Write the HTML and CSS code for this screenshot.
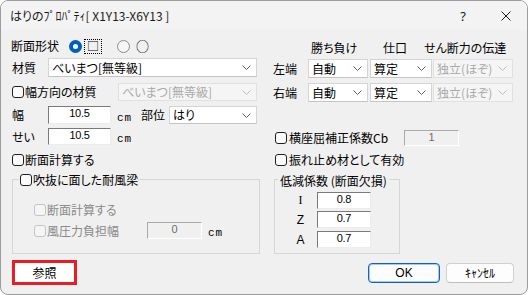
FILE: index.html
```html
<!DOCTYPE html>
<html lang="ja">
<head>
    <meta charset="UTF-8">
    <title>はりのプロパティ</title>
    <link rel="stylesheet" href="styles.css">
</head>
<body>
<div class="window">
    <div class="titlebar">
        <span class="title">はりのﾌﾟﾛﾊﾟﾃｨ[ X1Y13-X6Y13 ]</span>
        <span class="cap help">?</span>
        <span class="cap close">
            <svg width="10" height="10" viewBox="0 0 10 10"><path d="M0.5 0.5L9.5 9.5M9.5 0.5L0.5 9.5" stroke="#1b1b1b" stroke-width="1"/></svg>
        </span>
    </div>

    <div class="content">
        <!-- 左側 -->
        <div class="col">
            <div class="row r1">
                <span class="lbl w58">断面形状</span>
                <span class="radio on"></span>
                <span class="focus">□</span>
                <span class="radio off"></span>
                <span class="shape">○</span>
            </div>
            <div class="row r2">
                <span class="lbl w37">材質</span>
                <div class="combo w209">
                    <span>べいまつ[無等級]</span>
                    <svg width="9" height="5" viewBox="0 0 9 5"><polyline points="0.5,0.5 4.5,4.5 8.5,0.5" fill="none" stroke="#606060"/></svg>
                </div>
            </div>
            <div class="row r3">
                <span class="chk"></span>
                <span class="lbl w93">幅方向の材質</span>
                <div class="combo off w139">
                    <span>べいまつ[無等級]</span>
                    <svg width="9" height="5" viewBox="0 0 9 5"><polyline points="0.5,0.5 4.5,4.5 8.5,0.5" fill="none" stroke="#bcbcbc"/></svg>
                </div>
            </div>
            <div class="row r4">
                <span class="lbl w37">幅</span>
                <span class="edit w63">10.5</span>
                <span class="unit">cm</span>
                <span class="lbl bui">部位</span>
                <div class="combo w88">
                    <span>はり</span>
                    <svg width="9" height="5" viewBox="0 0 9 5"><polyline points="0.5,0.5 4.5,4.5 8.5,0.5" fill="none" stroke="#606060"/></svg>
                </div>
            </div>
            <div class="row r5">
                <span class="lbl w37">せい</span>
                <span class="edit w63">10.5</span>
                <span class="unit">cm</span>
            </div>
            <div class="row r6">
                <span class="chk"></span>
                <span class="lbl">断面計算する</span>
            </div>
            <fieldset class="group gl">
                <legend><span class="lg"><span class="chk"></span><span class="lbl">吹抜に面した耐風梁</span></span></legend>
                <div class="row g1 dis">
                    <span class="chk off"></span>
                    <span class="lbl">断面計算する</span>
                </div>
                <div class="row g2 dis">
                    <span class="chk off"></span>
                    <span class="lbl w100">風圧力負担幅</span>
                    <span class="edit off w55">0</span>
                    <span class="unit">cm</span>
                </div>
            </fieldset>
        </div>

        <!-- 右側 -->
        <div class="col">
            <div class="row hdr">
                <span class="h1">勝ち負け</span>
                <span class="h2">仕口</span>
                <span class="h3">せん断力の伝達</span>
            </div>
            <div class="row r2r">
                <span class="lbl w36">左端</span>
                <div class="combo w60">
                    <span>自動</span>
                    <svg width="9" height="5" viewBox="0 0 9 5"><polyline points="0.5,0.5 4.5,4.5 8.5,0.5" fill="none" stroke="#606060"/></svg>
                </div>
                <div class="combo w62 ml2">
                    <span>算定</span>
                    <svg width="9" height="5" viewBox="0 0 9 5"><polyline points="0.5,0.5 4.5,4.5 8.5,0.5" fill="none" stroke="#606060"/></svg>
                </div>
                <div class="combo off w80 ml1">
                    <span>独立(ほぞ)</span>
                    <svg width="9" height="5" viewBox="0 0 9 5"><polyline points="0.5,0.5 4.5,4.5 8.5,0.5" fill="none" stroke="#bcbcbc"/></svg>
                </div>
            </div>
            <div class="row r3r">
                <span class="lbl w36">右端</span>
                <div class="combo w60">
                    <span>自動</span>
                    <svg width="9" height="5" viewBox="0 0 9 5"><polyline points="0.5,0.5 4.5,4.5 8.5,0.5" fill="none" stroke="#606060"/></svg>
                </div>
                <div class="combo w62 ml2">
                    <span>算定</span>
                    <svg width="9" height="5" viewBox="0 0 9 5"><polyline points="0.5,0.5 4.5,4.5 8.5,0.5" fill="none" stroke="#606060"/></svg>
                </div>
                <div class="combo off w80 ml1">
                    <span>独立(ほぞ)</span>
                    <svg width="9" height="5" viewBox="0 0 9 5"><polyline points="0.5,0.5 4.5,4.5 8.5,0.5" fill="none" stroke="#bcbcbc"/></svg>
                </div>
            </div>
            <div class="row r4r">
                <span class="chk"></span>
                <span class="lbl w115">横座屈補正係数Cb</span>
                <span class="edit off w55">1</span>
            </div>
            <div class="row r5r">
                <span class="chk"></span>
                <span class="lbl">振れ止め材として有効</span>
            </div>
            <fieldset class="group gr">
                <legend><span class="lg">低減係数 (断面欠損)</span></legend>
                <div class="row k1">
                    <span class="key serif">I</span>
                    <span class="edit w54">0.8</span>
                </div>
                <div class="row k2">
                    <span class="key">Z</span>
                    <span class="edit w54">0.7</span>
                </div>
                <div class="row k3">
                    <span class="key">A</span>
                    <span class="edit w54">0.7</span>
                </div>
            </fieldset>
        </div>
    </div>

    <div class="footer">
        <span class="btn ref">参照</span>
        <span class="btn ok">OK</span>
        <span class="btn cancel">ｷｬﾝｾﾙ</span>
    </div>
</div>
</body>
</html>
```

FILE: styles.css
```css
* { box-sizing: border-box; }
html, body {
    margin: 0;
    background: #fff;
}
body {
    font-family: "Noto Sans CJK JP", "Noto Sans", sans-serif;
    font-size: 12px;
    color: #000;
    font-feature-settings: "palt";
}
.window {
    width: 528px;
    height: 295px;
    background: #f0f0f0;
    border: 1px solid #9c9c9c;
    border-radius: 8px;
    overflow: hidden;
    display: flex;
    flex-direction: column;
}
.titlebar {
    height: 29px;
    flex: none;
    display: flex;
    align-items: center;
    padding-left: 9px;
    background: #f3f3f3;
    color: #1a1a1a;
}
.title { flex: 1; line-height: 14px; }
.cap {
    height: 29px;
    display: flex;
    align-items: center;
    justify-content: center;
}
.help { width: 44px; font-family: "Noto Sans", sans-serif; font-size: 13px; }
.close { width: 42px; }

.content {
    display: grid;
    grid-template-columns: 246px 1fr;
    column-gap: 15px;
    padding-left: 10px;
}
.col { display: flex; flex-direction: column; }
.row { display: flex; align-items: center; flex: none; }
.lbl { line-height: 16px; white-space: nowrap; }
.w36 { width: 36px; padding-left: 1px; }
.w37 { width: 37px; padding-left: 1px; }
.w58 { width: 58px; }
.w93 { width: 93px; }
.w100 { width: 100px; }
.w115 { width: 115px; }

/* 左側の行 */
.r1 { margin-top: 8px; height: 16px; }
.r2 { margin-top: 4px; height: 19px; }
.r3 { margin-top: 6px; height: 18px; }
.r4 { margin-top: 5px; height: 18px; }
.r5 { margin-top: 4px; height: 17px; }
.r6 { margin-top: 8px; height: 14px; }
.bui { margin-left: 9px; width: 28px; }

/* 右側の行 */
.hdr { margin-top: 10px; height: 16px; }
.hdr span { line-height: 16px; white-space: nowrap; }
.h1 { margin-left: 39px; width: 72px; }
.h2 { width: 41px; }
.r2r { margin-top: 3px; height: 19px; }
.r3r { margin-top: 5px; height: 19px; }
.r4r { margin-top: 28px; height: 16px; }
.r5r { margin-top: 7px; height: 14px; }
.r4r .chk, .r5r .chk { margin-left: 3px; margin-right: 2px; }

/* ラジオ */
.radio {
    width: 13px;
    height: 13px;
    border-radius: 50%;
    flex: none;
    display: flex;
    align-items: center;
    justify-content: center;
}
.radio.on { background: #005fb8; }
.radio.on::after {
    content: "";
    width: 5px;
    height: 5px;
    border-radius: 50%;
    background: #fff;
}
.radio.off { border: 1px solid #8a8a8a; background: #f6f6f6; margin-left: 15px; }
.focus {
    margin-left: 2px;
    width: 18px;
    height: 15px;
    border: 1px dotted #000;
    display: flex;
    align-items: center;
    justify-content: center;
    font-size: 12px;
    line-height: 12px;
    font-feature-settings: normal;
}
.shape {
    margin-left: 6px;
    font-size: 13px;
    line-height: 14px;
    font-feature-settings: normal;
}

/* チェックボックス */
.chk {
    width: 12px;
    height: 12px;
    flex: none;
    border: 1px solid #1f1f1f;
    border-radius: 3px;
    background: #fbfbfb;
    margin-left: 1px;
    margin-right: 1px;
}
.chk.off { border-color: #c4c4c4; background: #f5f5f5; }
.dis .lbl { color: #8a8a8a; }

/* コンボ */
.combo {
    height: 100%;
    display: flex;
    align-items: center;
    justify-content: space-between;
    padding: 0 5px 0 3px;
    background: #fff;
    border: 1px solid #d4d4d4;
    border-bottom-color: #c4c4c4;
    line-height: 16px;
    white-space: nowrap;
    flex: none;
}
.combo.off { background: #f5f5f5; border-color: #e0e0e0; color: #a9a9a9; }
.r3 .combo { margin-left: auto; }
.w209 { width: 209px; }
.w139 { width: 139px; }
.w88 { width: 88px; }
.w60 { width: 60px; }
.w62 { width: 62px; }
.w80 { width: 80px; }
.ml1 { margin-left: 1px; }
.ml2 { margin-left: 2px; }

/* テキストボックス */
.edit {
    height: 100%;
    flex: none;
    background: #fff;
    border: 1px solid;
    border-color: #7a7a7a #ececec #ececec #7a7a7a;
    text-align: center;
    font-family: "Liberation Sans Narrow", "Liberation Sans", sans-serif;
    font-size: 11px;
    line-height: 12px;
    letter-spacing: -0.3px;
}
.edit.off { background: #f0f0f0; border-color: #a9a9a9 #fff #fff #a9a9a9; color: #6d6d6d; }
.w63 { width: 63px; }
.w55 { width: 55px; }
.w54 { width: 54px; }
.unit {
    align-self: flex-end;
    margin-left: 6px;
    font-family: "Liberation Mono", monospace;
    font-size: 11px;
    line-height: 11px;
    letter-spacing: 1px;
}

/* グループ */
.group {
    margin: 5px 0 0 0;
    padding: 0 0 0 6px;
    border: 1px solid #d6d6d6;
    height: 82px;
    min-width: 0;
}
.group legend { padding: 0; height: 14px; }
.lg { display: inline-flex; align-items: center; height: 14px; line-height: 14px; white-space: nowrap; }
.gl { margin-left: 1px; width: 248px; }
.gl .g1 { margin-top: 17px; height: 14px; padding-left: 14px; }
.gl .g2 { margin-top: 5px; height: 17px; padding-left: 14px; }
.gl .g2 .unit { margin-left: 6px; }
.gr { margin-left: 2px; width: 126px; padding-left: 3px; }
.gr legend .lg { padding: 0 2px; }
.k1 { margin-top: 6px; height: 17px; }
.k2 { margin-top: 2px; height: 17px; }
.k3 { margin-top: 3px; height: 17px; }
.key {
    margin-left: 14px;
    width: 17px;
    text-align: center;
    font-family: "Liberation Sans", sans-serif;
    font-size: 12px;
    margin-right: 8px;
}
.key.serif { font-family: "Liberation Serif", serif; }

/* ボタン */
.footer {
    display: flex;
    align-items: center;
    height: 25px;
    margin-top: 6px;
    padding: 0 13px 0 11px;
}
.btn {
    display: flex;
    align-items: center;
    justify-content: center;
    background: #fdfdfd;
    line-height: 14px;
}
.ref {
    width: 65px;
    height: 25px;
    border: 3px solid #ea1c24;
    background: #fff;
}
.ok {
    margin-left: auto;
    width: 72px;
    height: 20px;
    border: 1px solid #0a64c4;
    border-radius: 4px;
    box-shadow: inset 0 0 0 1px rgba(10,100,196,0.35);
    font-family: "Liberation Sans", sans-serif;
}
.cancel {
    margin-left: 6px;
    width: 68px;
    height: 20px;
    border: 1px solid #d0d0d0;
    border-bottom-color: #bdbdbd;
    border-radius: 4px;
}
```
